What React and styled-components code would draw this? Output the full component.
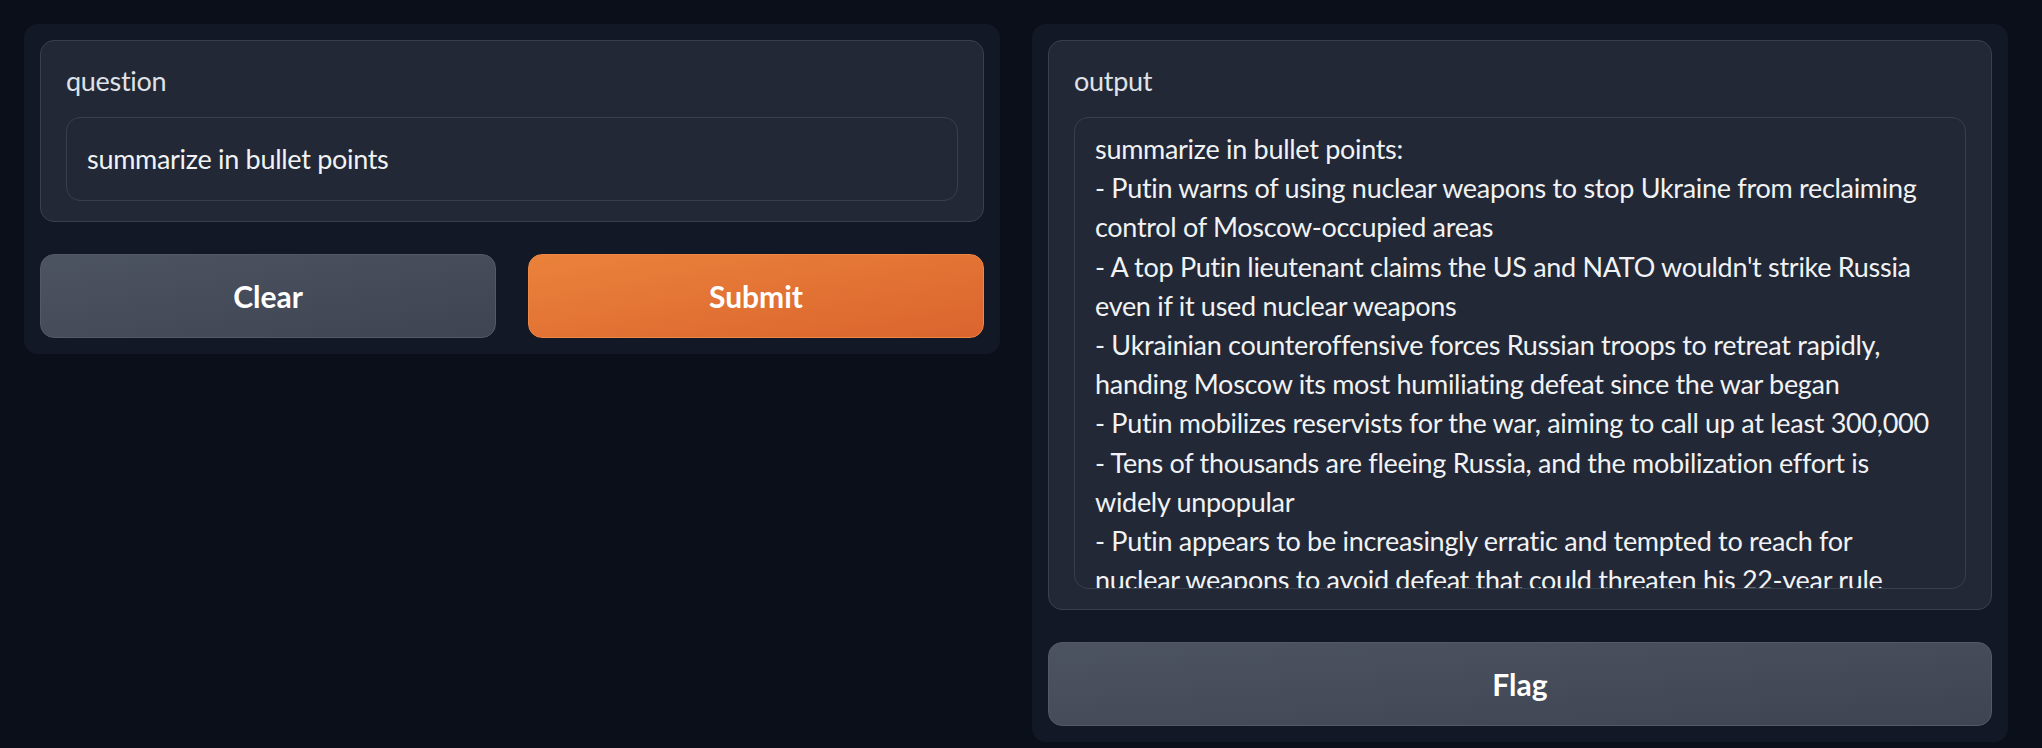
import styled, { createGlobalStyle } from "styled-components";

const GlobalStyle = createGlobalStyle`
    * {
        box-sizing: border-box;
    }
    body {
        margin: 0;
        background-color: #0b0f19;
        font-family: "Lato", "Noto Sans", sans-serif;
    }
`

const Page = styled.div`
    display: flex;
    align-items: flex-start;
    gap: 32px;
    padding: 24px 34px 0 24px;
    min-height: 748px;
`

const Panel = styled.div`
    flex: 1 1 0;
    min-width: 0;
    display: flex;
    flex-direction: column;
    gap: 32px;
    padding: 16px;
    background-color: #121825;
    border-radius: 14px;
`

const Block = styled.div`
    display: flex;
    flex-direction: column;
    padding: 20px 25px;
    background-color: #222836;
    border: 1px solid #383f4d;
    border-radius: 14px;
`

const Label = styled.span`
    display: block;
    height: 40px;
    margin-bottom: 16px;
    font-size: 27px;
    letter-spacing: -0.3px;
    line-height: 40px;
    color: #dfe2e7;
`

const TextBox = styled.div`
    height: ${props => props.height}px;
    padding: ${props => props.padTop}px 20px 0 20px;
    background-color: #222836;
    border: 1px solid #383f4d;
    border-radius: 14px;
    font-size: 27px;
    letter-spacing: -0.3px;
    line-height: ${props => props.lineHeight}px;
    color: #f1f2f4;
    white-space: pre;
    overflow: hidden;
`

const ButtonRow = styled.div`
    display: grid;
    grid-template-columns: 1fr 1fr;
    gap: 32px;
`

const Button = styled.button`
    height: 84px;
    border-radius: 14px;
    font-family: "Lato", "Noto Sans", sans-serif;
    font-size: 30px;
    font-weight: 700;
    color: #ffffff;
    cursor: pointer;
    border: 1px solid ${props => props.primary ? '#ee8742' : '#535a67'};
    background: ${props => props.primary
        ? 'linear-gradient(to bottom right, #ea823b, #db642e)'
        : 'linear-gradient(to bottom right, #4c5361, #3e4452)'};
`

const outputLines = [
    "summarize in bullet points:",
    "- Putin warns of using nuclear weapons to stop Ukraine from reclaiming",
    "control of Moscow-occupied areas",
    "- A top Putin lieutenant claims the US and NATO wouldn't strike Russia",
    "even if it used nuclear weapons",
    "- Ukrainian counteroffensive forces Russian troops to retreat rapidly,",
    "handing Moscow its most humiliating defeat since the war began",
    "- Putin mobilizes reservists for the war, aiming to call up at least 300,000",
    "- Tens of thousands are fleeing Russia, and the mobilization effort is",
    "widely unpopular",
    "- Putin appears to be increasingly erratic and tempted to reach for",
    "nuclear weapons to avoid defeat that could threaten his 22-year rule",
]

export default function App() {
    return (
        <>
            <GlobalStyle />
            <Page>
                <Panel>
                    <Block>
                        <Label>question</Label>
                        <TextBox height={84} padTop={21} lineHeight={40}>
                            summarize in bullet points
                        </TextBox>
                    </Block>
                    <ButtonRow>
                        <Button>Clear</Button>
                        <Button primary>Submit</Button>
                    </ButtonRow>
                </Panel>
                <Panel>
                    <Block>
                        <Label>output</Label>
                        <TextBox height={472} padTop={11} lineHeight={39.2}>
                            {outputLines.join("\n")}
                        </TextBox>
                    </Block>
                    <Button>Flag</Button>
                </Panel>
            </Page>
        </>
    )
}
